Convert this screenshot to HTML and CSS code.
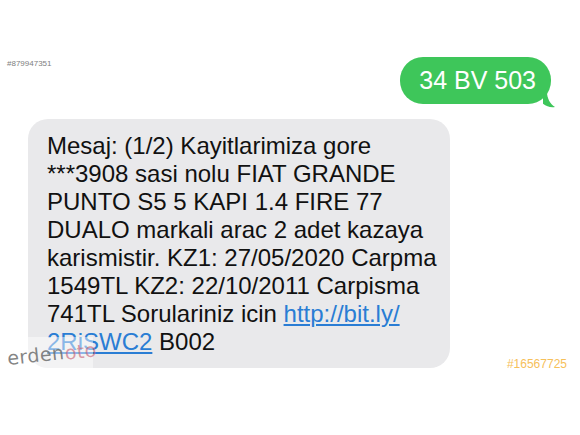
FILE: index.html
```html
<!DOCTYPE html>
<html lang="tr">
<head>
<meta charset="utf-8">
<link rel="stylesheet" href="styles.css">
</head>
<body>
<div class="page">
  <div class="top-row">
    <span class="id">#879947351</span>
    <div class="bubble out">34 BV 503
      <svg class="tail" width="14" height="16" viewBox="0 0 14 16"><path d="M0 0 L4 0 C4 6 7 12 12 15 C7 16 2 14 -2 10 Z" fill="#3ec65a"/></svg>
    </div>
  </div>
  <div class="mid-row">
    <div class="bubble in">
      <div class="line">Mesaj: (1/2) Kayitlarimiza gore</div>
      <div class="line">***3908 sasi nolu FIAT GRANDE</div>
      <div class="line">PUNTO S5 5 KAPI 1.4 FIRE 77</div>
      <div class="line">DUALO markali arac 2 adet kazaya</div>
      <div class="line">karismistir. KZ1: 27/05/2020 Carpma</div>
      <div class="line">1549TL KZ2: 22/10/2011 Carpisma</div>
      <div class="line">741TL Sorulariniz icin <span class="link">http://bit.ly/</span></div>
      <div class="line"><span class="link">2RiSWC2</span> B002</div>
    </div>
    <span class="tag">#16567725</span>
  </div>
  <div class="watermark"><span class="wm-grey">erden</span><span class="wm-red">oto</span></div>
</div>
</body>
</html>
```

FILE: styles.css
```css
html, body {
  margin: 0;
  padding: 0;
  background: #ffffff;
}
.page {
  position: relative;
  width: 580px;
  height: 435px;
  padding-top: 57px;
  box-sizing: border-box;
  font-family: "Liberation Sans", Arial, sans-serif;
}
.top-row {
  display: flex;
  align-items: flex-start;
  justify-content: space-between;
  padding: 0 29px 0 7px;
}
.id {
  font-size: 8px;
  line-height: 10px;
  margin-top: 2px;
  color: #7e7e7e;
}
.bubble {
  position: relative;
  color: #000;
}
.out {
  background: #3ec65a;
  color: #fff;
  font-size: 25px;
  height: 47px;
  line-height: 47px;
  padding: 0 15px 0 19px;
  border-radius: 23px;
}
.tail {
  position: absolute;
  right: -6px;
  bottom: -4px;
}
.mid-row {
  display: flex;
  align-items: flex-end;
  padding: 15px 13px 0 28px;
}
.in {
  width: 422px;
  box-sizing: border-box;
  background: #e9e9eb;
  border-radius: 20px;
  padding: 13px 0 12px 19px;
  font-size: 24px;
  line-height: 28px;
  color: #111;
}
.line {
  white-space: nowrap;
}
.link {
  color: #2a7dd4;
  text-decoration: underline;
  text-decoration-thickness: 1.5px;
  text-underline-offset: 2px;
}
.tag {
  margin-left: auto;
  margin-bottom: -3px;
  font-size: 12px;
  line-height: 14px;
  color: #f6c05a;
}
.watermark {
  position: absolute;
  left: 11px;
  top: 337px;
  width: 82px;
  height: 36px;
  background: rgba(255, 255, 255, 0.45);
  display: flex;
  align-items: center;
  justify-content: center;
  font-family: "DejaVu Sans", sans-serif;
  font-size: 19px;
  letter-spacing: 0.5px;
}
.wm-grey {
  color: rgba(110, 110, 110, 0.85);
  transform: rotate(-6deg);
  display: inline-block;
}
.wm-red {
  color: rgba(200, 90, 110, 0.6);
  transform: rotate(-6deg) translateY(-4px);
  display: inline-block;
}
```
